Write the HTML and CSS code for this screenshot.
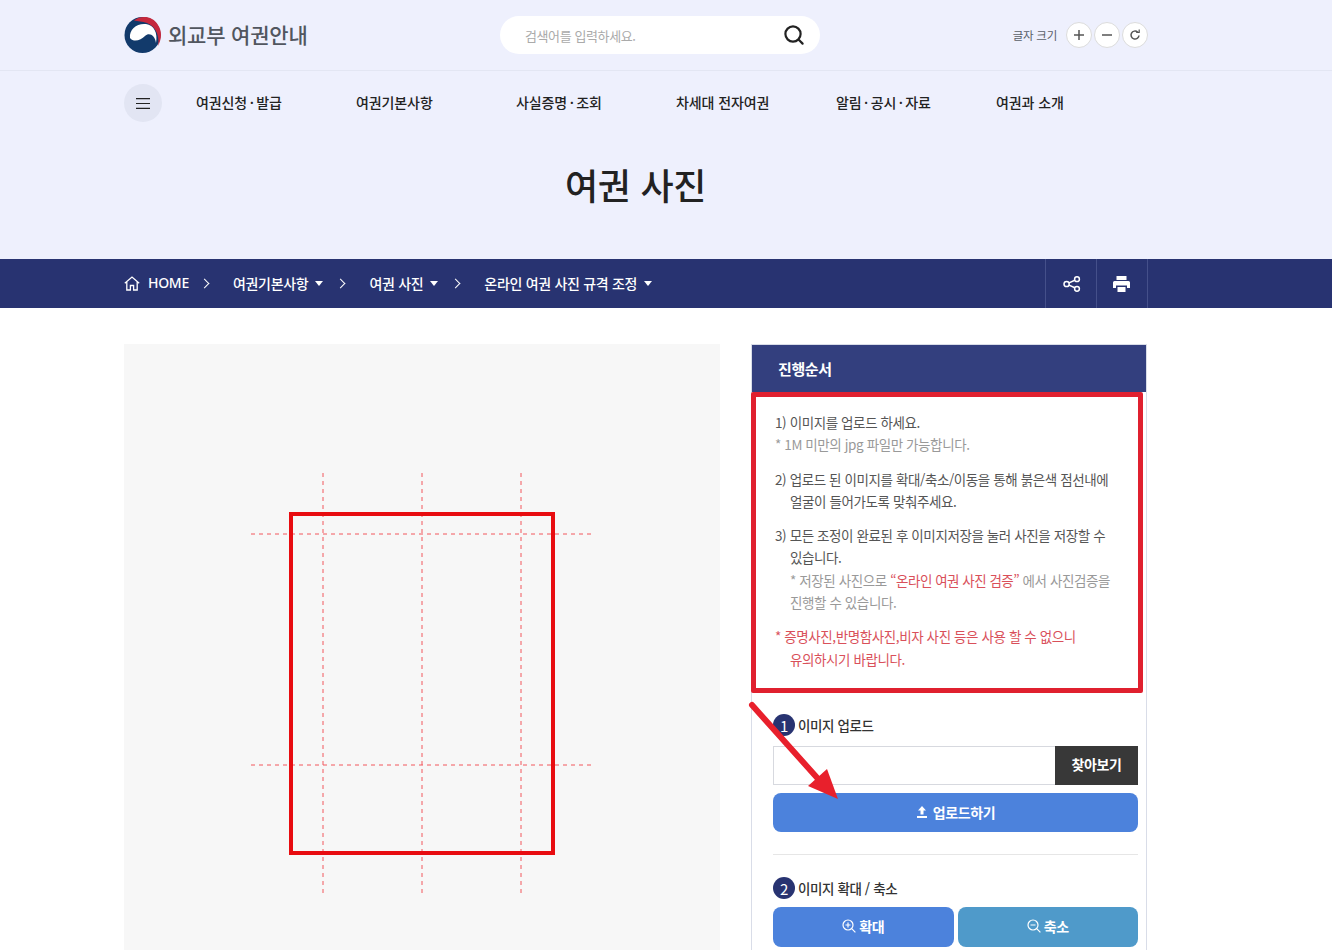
FILE: index.html
```html
<!DOCTYPE html>
<html lang="ko">
  <head>
    <meta charset="UTF-8" />
    <meta name="viewport" content="width=device-width, initial-scale=1.0" />
    <title>여권 사진</title>
    <link rel="stylesheet" href="styles.css">
  </head>

  <body>
    <header class="top">
      <div class="wrap top-row">
        <a class="logo">
          <svg width="38" height="36" viewBox="0 0 38 36">
            <circle cx="18.500" cy="18" r="18" fill="#123a6b" />
            <path d="M6 21C5 12 13 6 22 7C30 8 34 16 32 26C31 18 25 15 21 19C17 23 10 26 6 21Z" fill="#fff" />
            <path d="M10 3.500C17-2 29-1 34 8C38 14 38 21 34 29C36 18 31 9 23 6C18 4.500 14 4 10 3.500Z" fill="#c5283d" />
          </svg>
          <span class="logo-text">외교부 여권안내</span>
        </a>
        <div class="search">
          <span class="search-text">검색어를 입력하세요.</span>
          <svg width="22" height="22" viewBox="0 0 22 22" fill="none" stroke="#222" stroke-width="2.200" stroke-linecap="round">
            <circle cx="10" cy="10" r="7.600" />
            <path d="M16 16l3.600 3.600" />
          </svg>
        </div>
        <div class="font-size">
          <span class="font-label">글자 크기</span>
          <span class="round-btn">
            <svg width="10" height="10" viewBox="0 0 10 10" stroke="#555" stroke-width="1.500"><path d="M5 0v10M0 5h10" /></svg>
          </span>
          <span class="round-btn">
            <svg width="10" height="10" viewBox="0 0 10 10" stroke="#555" stroke-width="1.500"><path d="M0 5h10" /></svg>
          </span>
          <span class="round-btn">
            <svg width="12" height="12" viewBox="0 0 12 12" fill="none" stroke="#555" stroke-width="1.500"><path d="M10 6.500A4 4 0 1 1 8.600 3" /><path d="M7.200 3.400h3V.6" stroke-width="1.200" /></svg>
          </span>
        </div>
      </div>
    </header>

    <nav class="gnb">
      <div class="wrap gnb-row">
        <span class="menu-btn">
          <svg width="14" height="11" viewBox="0 0 14 11" stroke="#222" stroke-width="1.200"><path d="M0 .6h14M0 5.500h14M0 10.400h14" /></svg>
        </span>
        <a class="gnb-item">여권신청<span class="dot">·</span>발급</a>
        <a class="gnb-item">여권기본사항</a>
        <a class="gnb-item">사실증명<span class="dot">·</span>조회</a>
        <a class="gnb-item">차세대 전자여권</a>
        <a class="gnb-item">알림<span class="dot">·</span>공시<span class="dot">·</span>자료</a>
        <a class="gnb-item">여권과 소개</a>
      </div>
    </nav>

    <div class="page-head">
      <h1 class="wrap page-title">여권 사진</h1>
    </div>

    <div class="crumbs">
      <div class="wrap crumbs-row">
        <svg class="home-icon" width="16" height="15" viewBox="0 0 16 15" fill="none" stroke="#fff" stroke-width="1.300"><path d="M.8 7.200L8 1l7.200 6.200M2.800 6v8h3.600V9.500h3.200V14h3.600V6" /></svg>
        <span class="crumb home">HOME</span>
        <span class="sep"></span>
        <span class="crumb">여권기본사항</span>
        <span class="caret"></span>
        <span class="sep"></span>
        <span class="crumb">여권 사진</span>
        <span class="caret"></span>
        <span class="sep"></span>
        <span class="crumb">온라인 여권 사진 규격 조정</span>
        <span class="caret"></span>
        <div class="crumb-tools">
          <span class="tool">
            <svg class="share-icon" width="18" height="16" viewBox="0 0 18 16" fill="none" stroke="#fff" stroke-width="1.500"><circle cx="3.600" cy="8" r="2.600" /><circle cx="14" cy="3.200" r="2.400" /><circle cx="14" cy="12.800" r="2.400" /><path d="M6 6.900l5.800-2.700M6 9.100l5.800 2.700" /></svg>
          </span>
          <span class="tool">
            <svg class="print-icon" width="17" height="16" viewBox="0 0 17 16" fill="#fff"><path d="M3.500 0h10v4h-10zM1.500 5h14A1.500 1.500 0 0 1 17 6.500V12h-3V9.500H3V12H0V6.500A1.500 1.500 0 0 1 1.500 5zM4.500 11h8v5h-8z" /></svg>
          </span>
        </div>
      </div>
    </div>

    <main class="wrap content">
      <section class="canvas">
        <svg class="guides" width="596" height="606" viewBox="0 0 596 606">
          <g fill="none" stroke="#f2575c" stroke-width="1" stroke-dasharray="4 4">
            <path d="M199 129v420M298 129v420M397 129v420" />
            <path d="M127 190h340M127 421h340" />
          </g>
          <rect x="167" y="170" width="262" height="339" fill="none" stroke="#e80c10" stroke-width="4" />
        </svg>
      </section>

      <aside class="panel">
        <h2 class="panel-head">진행순서</h2>
        <div class="steps">
          <p class="step">1) 이미지를 업로드 하세요.<br><span class="note">* 1M 미만의 jpg 파일만 가능합니다.</span></p>
          <p class="step hang">2) 업로드 된 이미지를 확대/축소/이동을 통해 붉은색 점선내에 얼굴이 들어가도록 맞춰주세요.</p>
          <p class="step hang">3) 모든 조정이 완료된 후 이미지저장을 눌러 사진을 저장할 수 있습니다.<br><span class="note">* 저장된 사진으로 <span class="link">“온라인 여권 사진 검증”</span> 에서 사진검증을 진행할 수 있습니다.</span></p>
          <p class="step hang warn">* 증명사진,반명함사진,비자 사진 등은 사용 할 수 없으니<br>유의하시기 바랍니다.</p>
        </div>

        <div class="tool-box">
          <h3 class="tool-title"><span class="num">1</span>이미지 업로드</h3>
          <div class="file-row">
            <span class="file-input"></span>
            <span class="file-btn">찾아보기</span>
          </div>
          <button class="btn blue upload-btn">
            <svg width="12" height="12" viewBox="0 0 12 12" fill="#fff"><path d="M6 0l4 4.500H7.500V8.500h-3V4.500H2zM1 10h10v2H1z" /></svg>
            업로드하기
          </button>
          <hr class="line">
          <h3 class="tool-title tight"><span class="num">2</span>이미지 확대 / 축소</h3>
          <div class="btn-row">
            <button class="btn blue">
              <svg width="14" height="14" viewBox="0 0 14 14" fill="none" stroke="#fff" stroke-width="1.200"><circle cx="6" cy="6" r="5" /><path d="M9.700 9.700L13.400 13.400M3.500 6h5M6 3.500v5" /></svg>
              확대
            </button>
            <button class="btn teal">
              <svg width="14" height="14" viewBox="0 0 14 14" fill="none" stroke="#fff" stroke-width="1.200"><circle cx="6" cy="6" r="5" /><path d="M9.700 9.700L13.400 13.400M3.500 6h5" /></svg>
              축소
            </button>
          </div>
        </div>
      </aside>

      <div class="mark-box"></div>
      <svg class="mark-arrow" width="100" height="110" viewBox="0 0 100 110">
        <path d="M4 4L72 80" stroke="#e8202c" stroke-width="6" stroke-linecap="round" />
        <path d="M90 98L79 68L60 85Z" fill="#e8202c" />
      </svg>
    </main>
  </body>
</html>
```

FILE: styles.css
```css
html,
body {
  height: 950px;
  overflow: hidden;
}

body {
  margin: 0;
  background: #fff;
  font-family: "Noto Sans CJK KR", "Noto Sans", sans-serif;
  font-size: 14px;
  color: #222;
}

.wrap {
  width: 1023px;
  margin-left: 124px;
}

.top {
  background: #eef0fd;
  border-bottom: 1px solid #e3e6f3;
}

.top-row {
  display: flex;
  align-items: center;
  height: 70px;
}

.logo {
  display: flex;
  align-items: center;
  gap: 6px;
  width: 376px;
}

.logo-text {
  padding-bottom: 3px;
  font-size: 21px;
  font-weight: 500;
  letter-spacing: -0.2px;
  color: #51565f;
}

.search {
  display: flex;
  align-items: center;
  justify-content: space-between;
  width: 320px;
  height: 38px;
  padding: 0 15px 0 25px;
  box-sizing: border-box;
  background: #fff;
  border-radius: 19px;
}

.search-text {
  font-size: 13px;
  letter-spacing: -0.4px;
  color: #aaa;
}

.font-size {
  display: flex;
  align-items: center;
  gap: 2px;
  margin-left: auto;
  margin-right: -1px;
}

.font-label {
  margin-right: 7px;
  font-size: 11.500px;
  letter-spacing: -0.25px;
  color: #5a5f68;
}

.round-btn {
  display: flex;
  align-items: center;
  justify-content: center;
  width: 24px;
  height: 24px;
  background: #fff;
  border: 1px solid #dcdcdc;
  border-radius: 50%;
}

.gnb {
  background: #eef0fd;
}

.gnb-row {
  display: flex;
  align-items: center;
  height: 64px;
}

.menu-btn {
  display: flex;
  align-items: center;
  justify-content: center;
  flex: none;
  width: 38px;
  height: 38px;
  margin-right: 34px;
  background: #e2e5f3;
  border-radius: 50%;
}

.gnb-item {
  flex: none;
  width: 160px;
  padding-bottom: 3px;
  font-size: 14px;
  font-weight: 500;
  letter-spacing: -0.1px;
  color: #222;
}

.dot {
  margin: 0 2.500px;
}

.page-head {
  height: 124px;
  background: #eef0fd;
}

.page-title {
  margin-top: 0;
  margin-bottom: 0;
  padding-top: 19px;
  font-size: 36px;
  font-weight: 500;
  line-height: 60px;
  letter-spacing: -0.3px;
  text-align: center;
  color: #222;
}

.crumbs {
  background: #283371;
}

.crumbs-row {
  display: flex;
  align-items: center;
  height: 49px;
  color: #fff;
}

.home-icon {
  margin-right: 8px;
}

.crumb {
  padding-bottom: 2px;
  font-size: 14px;
  font-weight: 500;
  letter-spacing: -0.3px;
}

.home {
  font-family: "Noto Sans", sans-serif;
  font-size: 14px;
}

.caret {
  width: 0;
  height: 0;
  margin-left: 7px;
  border-top: 5px solid #fff;
  border-left: 4px solid transparent;
  border-right: 4px solid transparent;
}

.sep {
  width: 6px;
  height: 6px;
  margin: 0 25px 0 14px;
  border-top: 1px solid #fff;
  border-right: 1px solid #fff;
  transform: rotate(45deg);
}

.home + .sep {
  margin: 0 25px 0 12px;
}

.crumb-tools {
  display: flex;
  margin-left: auto;
  margin-right: -1px;
  height: 49px;
  border-left: 1px solid #45508a;
}

.tool {
  display: flex;
  align-items: center;
  justify-content: center;
  width: 50px;
  border-right: 1px solid #45508a;
}

.share-icon {
  margin-left: 2px;
}

.print-icon {
  margin-right: 2px;
}

.content {
  position: relative;
  display: flex;
  justify-content: space-between;
  align-items: flex-start;
  padding-top: 36px;
}

.canvas {
  flex: none;
  width: 596px;
  height: 640px;
  background: #f7f7f7;
}

.guides {
  display: block;
}

.panel {
  flex: none;
  width: 396px;
  height: 640px;
  box-sizing: border-box;
  border: 1px solid #d9dde8;
}

.panel-head {
  height: 47px;
  margin: 0;
  padding-left: 26px;
  background: #333f7e;
  font-size: 15px;
  font-weight: 700;
  line-height: 47px;
  letter-spacing: -0.4px;
  color: #fff;
}

.steps {
  height: 322px;
  padding: 19px 30px 0 23px;
  box-sizing: border-box;
}

.step {
  margin: 0 0 12px;
  font-size: 13.500px;
  line-height: 22.300px;
  letter-spacing: -0.4px;
  color: #555;
}

.hang {
  padding-left: 15px;
  text-indent: -15px;
}

.note {
  color: #999;
}

.link {
  letter-spacing: -0.5px;
  color: #d9505a;
}

.warn {
  color: #d9505a;
}

.tool-box {
  padding: 0 8px 0 21px;
}

.tool-title {
  display: flex;
  align-items: center;
  gap: 3px;
  height: 22px;
  margin: 0 0 10px;
  font-size: 13.500px;
  font-weight: 500;
  letter-spacing: -0.4px;
  color: #333;
}

.tight {
  margin-bottom: 8px;
}

.num {
  display: flex;
  align-items: center;
  justify-content: center;
  width: 22px;
  height: 22px;
  background: #283371;
  border-radius: 50%;
  font-size: 15px;
  font-weight: 400;
  color: #fff;
}

.file-row {
  display: flex;
  height: 39px;
}

.file-input {
  flex: 1;
  box-sizing: border-box;
  background: #fff;
  border: 1px solid #d7d9df;
  border-right: 0;
}

.file-btn {
  width: 83px;
  background: #383838;
  font-size: 14px;
  font-weight: 700;
  line-height: 37px;
  letter-spacing: -0.4px;
  text-align: center;
  color: #fff;
}

.btn {
  display: flex;
  align-items: center;
  justify-content: center;
  gap: 3px;
  width: 100%;
  height: 40px;
  padding: 0 0 2px;
  border: 0;
  border-radius: 8px;
  font-family: inherit;
  font-size: 14px;
  font-weight: 700;
  letter-spacing: -0.4px;
  color: #fff;
}

.blue {
  background: #4c82dc;
}

.teal {
  background: #4f9aca;
}

.upload-btn {
  gap: 5px;
  height: 39px;
  margin-top: 8px;
}

.line {
  height: 1px;
  margin: 22px 0 22px;
  border: 0;
  background: #e6e6e6;
}

.btn-row {
  display: flex;
  gap: 4px;
}

.mark-box {
  position: absolute;
  left: 627px;
  top: 84px;
  width: 392px;
  height: 301px;
  box-sizing: border-box;
  border: 5px solid #e0202f;
  border-radius: 2px;
}

.mark-arrow {
  position: absolute;
  left: 624px;
  top: 393px;
}
```
